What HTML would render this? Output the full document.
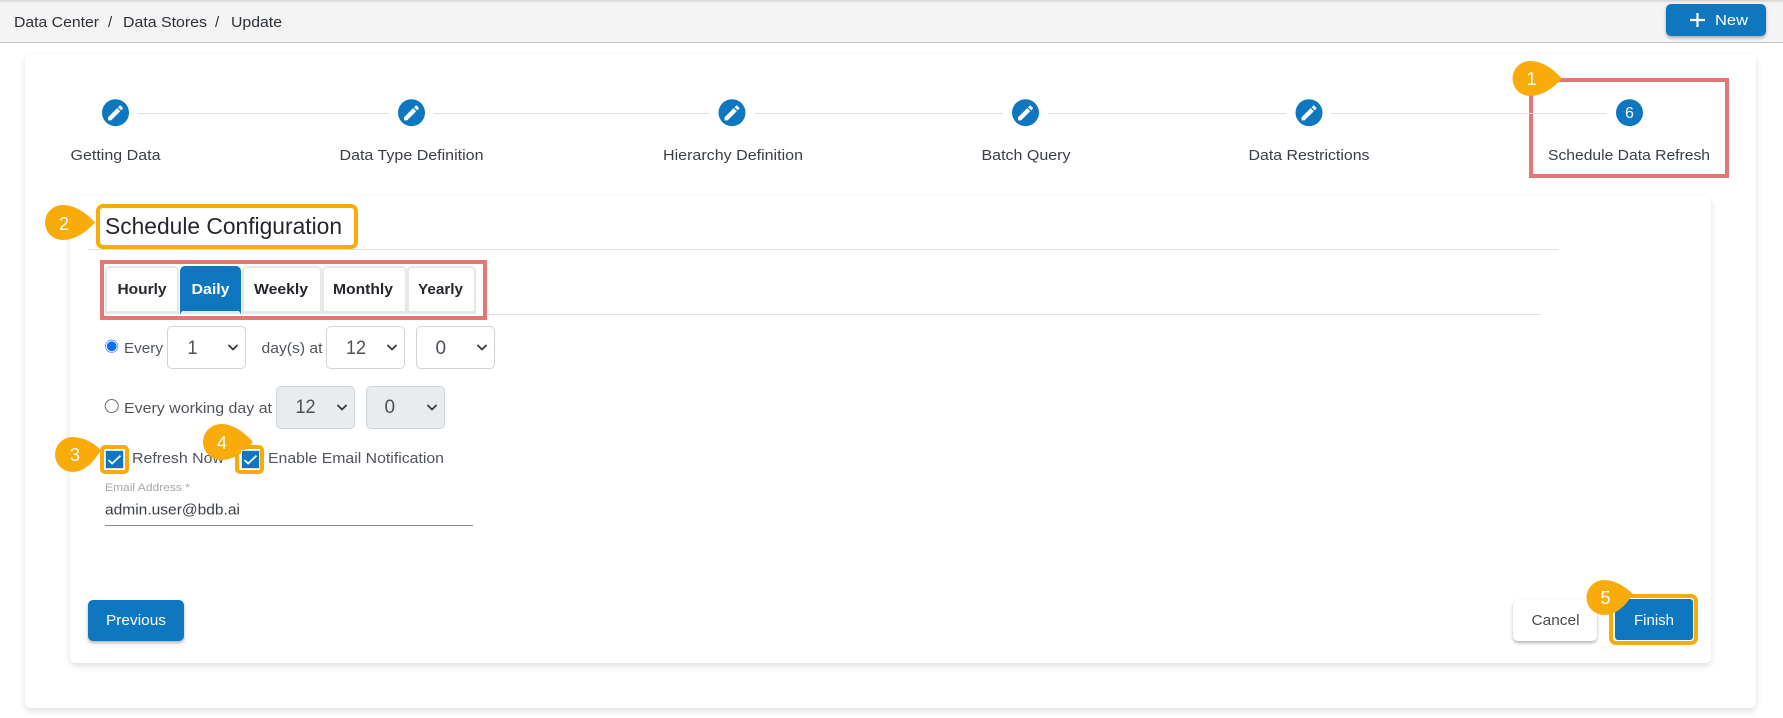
<!DOCTYPE html>
<html><head><meta charset="utf-8"><style>
html,body{margin:0;padding:0;width:1783px;height:718px;overflow:hidden;background:#fff;font-family:"Liberation Sans",sans-serif}
.b{position:absolute;box-sizing:border-box}
.bar{left:0;top:0;width:1783px;height:43px;background:#f4f4f4;border-bottom:1px solid #c6c6c6}
.top{left:0;top:0;width:1783px;height:3px;background:linear-gradient(#d4d4d4,#f4f4f4)}
.card{background:#fff;border-radius:6px;box-shadow:0 3px 7px rgba(0,0,0,.13)}
.btn{background:#0f77bf;border-radius:5px;box-shadow:0 2px 3px rgba(0,0,0,.3)}
.tab{top:266px;height:48px;border:2px solid #e6e7ea;border-bottom-width:3px;border-radius:5px 5px 0 0;background:#fff}
.sel{border:1px solid #ced4da;border-radius:5px;background:#fff}
.dis{background:#e9ecef}
.hl{border:4px solid #f9ab0a;border-radius:5px}
.red{border:4px solid #e67575}
.cb{background:#0f77bf;border:1px solid #d5e4ef}
svg{position:absolute;left:0;top:0}
text{font-family:"Liberation Sans",sans-serif}
.d{fill:#2c3038;font-size:15px}
.l{fill:#3a3f46;font-size:15px}
.m{fill:#50555b;font-size:15px}
.t{fill:#24272c;font-size:15px;font-weight:bold}
.v{fill:#495057;font-size:19px}
.w{fill:#fff;font-size:15px}
.n{fill:#fff;font-size:18px;text-anchor:middle}
</style></head><body>
<div class="b bar"></div><div class="b top"></div>
<div class="b btn" style="left:1666px;top:4px;width:100px;height:32px"></div>
<div class="b card" style="left:25px;top:54px;width:1731px;height:654px"></div>
<div class="b card" style="left:70px;top:196px;width:1641px;height:467px"></div>

<div class="b" style="left:88px;top:249px;width:1471px;height:1px;background:#dfdfdf"></div>
<div class="b" style="left:487px;top:314px;width:1054px;height:1px;background:#dfdfdf"></div>
<div class="b tab" style="left:105px;width:74px"></div>
<div class="b tab" style="left:180px;width:61px;background:#0f77bf;border-color:#0f77bf;border-bottom-color:#e6e7ea"></div>
<div class="b tab" style="left:242px;width:80px"></div>
<div class="b tab" style="left:322px;width:85px"></div>
<div class="b tab" style="left:407px;width:69px"></div>
<div class="b red" style="left:100px;top:260px;width:387px;height:60px"></div>
<div class="b red" style="left:1529px;top:78px;width:200px;height:100px"></div>
<div class="b hl" style="left:96px;top:204px;width:262px;height:45px;border-radius:7px"></div>

<div class="b sel" style="left:167px;top:326px;width:79px;height:43px"></div>
<div class="b sel" style="left:326px;top:326px;width:79px;height:43px"></div>
<div class="b sel" style="left:416px;top:326px;width:79px;height:43px"></div>
<div class="b sel dis" style="left:276px;top:386px;width:79px;height:43px"></div>
<div class="b sel dis" style="left:366px;top:386px;width:79px;height:43px"></div>

<div class="b" style="left:105px;top:525px;width:368px;height:1px;background:#8a8a8a"></div>

<div class="b btn" style="left:88px;top:600px;width:96px;height:41px"></div>
<div class="b btn" style="left:1513px;top:600px;width:84px;height:41px;background:#fff"></div>
<div class="b hl" style="left:1609px;top:594px;width:89px;height:51px;border-radius:7px"></div>
<div class="b" style="left:1615px;top:599px;width:78px;height:41px;background:#0f77bf;border-radius:3px"></div>

<svg width="1783" height="718" viewBox="0 0 1783 718">
<!-- top bar -->
<text class="d" x="14" y="27" textLength="85" lengthAdjust="spacingAndGlyphs">Data Center</text>
<text class="d" x="108" y="27">/</text>
<text class="d" x="123" y="27" textLength="84" lengthAdjust="spacingAndGlyphs">Data Stores</text>
<text class="d" x="215" y="27">/</text>
<text class="d" x="231" y="27" textLength="51" lengthAdjust="spacingAndGlyphs">Update</text>
<path d="M1697.5 13v14M1690 20h15" stroke="#fff" stroke-width="2.2" fill="none"/>
<text class="w" x="1715" y="25" font-size="16" textLength="33" lengthAdjust="spacingAndGlyphs">New</text>

<!-- stepper lines -->
<g stroke="#dedede" stroke-width="1">
<path d="M138 113.5H389M434 113.5H709M755 113.5H1003M1048 113.5H1286M1331 113.5H1607"/>
</g>
<g fill="#0f77bf">
<circle cx="115.5" cy="112.7" r="13.5"/><circle cx="411.5" cy="112.7" r="13.5"/>
<circle cx="732" cy="112.7" r="13.5"/><circle cx="1025.5" cy="112.7" r="13.5"/>
<circle cx="1309" cy="112.7" r="13.5"/><circle cx="1629.5" cy="112.7" r="13.5"/>
</g>
<g fill="#fff">
<path transform="translate(105.5,103) scale(.83)" d="M3 17.25V21h3.75L17.81 9.94l-3.75-3.75L3 17.25zM20.71 7.04c.39-.39.39-1.02 0-1.41l-2.34-2.34c-.39-.39-1.02-.39-1.41 0l-1.83 1.83 3.75 3.75 1.83-1.83z"/>
<path transform="translate(401.5,103) scale(.83)" d="M3 17.25V21h3.75L17.81 9.94l-3.75-3.75L3 17.25zM20.71 7.04c.39-.39.39-1.02 0-1.41l-2.34-2.34c-.39-.39-1.02-.39-1.41 0l-1.83 1.83 3.75 3.75 1.83-1.83z"/>
<path transform="translate(722,103) scale(.83)" d="M3 17.25V21h3.75L17.81 9.94l-3.75-3.75L3 17.25zM20.71 7.04c.39-.39.39-1.02 0-1.41l-2.34-2.34c-.39-.39-1.02-.39-1.41 0l-1.83 1.83 3.75 3.75 1.83-1.83z"/>
<path transform="translate(1015.5,103) scale(.83)" d="M3 17.25V21h3.75L17.81 9.94l-3.75-3.75L3 17.25zM20.71 7.04c.39-.39.39-1.02 0-1.41l-2.34-2.34c-.39-.39-1.02-.39-1.41 0l-1.83 1.83 3.75 3.75 1.83-1.83z"/>
<path transform="translate(1299,103) scale(.83)" d="M3 17.25V21h3.75L17.81 9.94l-3.75-3.75L3 17.25zM20.71 7.04c.39-.39.39-1.02 0-1.41l-2.34-2.34c-.39-.39-1.02-.39-1.41 0l-1.83 1.83 3.75 3.75 1.83-1.83z"/>
</g>
<text x="1629.5" y="118" fill="#fff" font-size="16" text-anchor="middle">6</text>
<text class="l" x="70.5" y="160" textLength="90" lengthAdjust="spacingAndGlyphs">Getting Data</text>
<text class="l" x="339.5" y="160" textLength="144" lengthAdjust="spacingAndGlyphs">Data Type Definition</text>
<text class="l" x="663" y="160" textLength="140" lengthAdjust="spacingAndGlyphs">Hierarchy Definition</text>
<text class="l" x="981.5" y="160" textLength="89" lengthAdjust="spacingAndGlyphs">Batch Query</text>
<text class="l" x="1248.5" y="160" textLength="121" lengthAdjust="spacingAndGlyphs">Data Restrictions</text>
<text class="l" x="1548" y="160" textLength="162" lengthAdjust="spacingAndGlyphs">Schedule Data Refresh</text>

<!-- heading -->
<text x="105" y="234" fill="#23262b" font-size="23" textLength="237" lengthAdjust="spacingAndGlyphs">Schedule Configuration</text>

<!-- tabs -->
<text class="t" x="117.5" y="294" textLength="49" lengthAdjust="spacingAndGlyphs">Hourly</text>
<text class="t" x="191.5" y="294" textLength="38" lengthAdjust="spacingAndGlyphs" style="fill:#fff">Daily</text>
<text class="t" x="254" y="294" textLength="54" lengthAdjust="spacingAndGlyphs">Weekly</text>
<text class="t" x="333" y="294" textLength="60" lengthAdjust="spacingAndGlyphs">Monthly</text>
<text class="t" x="418" y="294" textLength="45" lengthAdjust="spacingAndGlyphs">Yearly</text>

<!-- row 1 -->
<circle cx="111.7" cy="346.3" r="6.5" fill="#0d6efd"/>
<circle cx="111.7" cy="346.3" r="5.4" fill="none" stroke="#fff" stroke-width="1"/>
<text class="m" x="124" y="353" textLength="39" lengthAdjust="spacingAndGlyphs">Every</text>
<text class="v" x="187.5" y="354" textLength="10" lengthAdjust="spacingAndGlyphs">1</text>
<text class="m" x="261.5" y="353" textLength="61" lengthAdjust="spacingAndGlyphs">day(s) at</text>
<text class="v" x="346" y="354" textLength="20" lengthAdjust="spacingAndGlyphs">12</text>
<text class="v" x="435.5" y="354">0</text>
<g fill="none" stroke="#343a40" stroke-width="1.8" stroke-linecap="round" stroke-linejoin="round">
<path d="M229 345.5l4 4 4-4M388 345.5l4 4 4-4M478 345.5l4 4 4-4M338 405.5l4 4 4-4M428 405.5l4 4 4-4"/>
</g>

<!-- row 2 -->
<circle cx="111.7" cy="406" r="6.5" fill="#fff" stroke="#6b6f73" stroke-width="1"/>
<text class="m" x="124" y="413" textLength="148" lengthAdjust="spacingAndGlyphs">Every working day at</text>
<text class="v" x="295.5" y="413" textLength="20" lengthAdjust="spacingAndGlyphs">12</text>
<text class="v" x="384.5" y="413">0</text>

<!-- row 3 -->
<text class="m" x="132" y="463" textLength="92" lengthAdjust="spacingAndGlyphs">Refresh Now</text>
<text class="m" x="268" y="463" textLength="176" lengthAdjust="spacingAndGlyphs">Enable Email Notification</text>
<text x="105" y="491" fill="#a8a8a8" font-size="11" textLength="85" lengthAdjust="spacingAndGlyphs">Email Address *</text>
<text x="105" y="514.5" fill="#3a3f45" font-size="15" textLength="135" lengthAdjust="spacingAndGlyphs">admin.user@bdb.ai</text>

<!-- buttons -->
<text class="w" x="106" y="625" textLength="60" lengthAdjust="spacingAndGlyphs">Previous</text>
<text x="1531.5" y="625" fill="#4a4a4a" font-size="15" textLength="48" lengthAdjust="spacingAndGlyphs">Cancel</text>
<text class="w" x="1634" y="625" textLength="40" lengthAdjust="spacingAndGlyphs">Finish</text>

<!-- badges -->
<g fill="#f9ab0a">
<path d="M1562 78.5Q1546 61 1530 61A17.5 17.5 0 0 0 1530 96Q1546 96 1562 78.5Z"/>
<path d="M95 222.5Q79 205 62.5 205A17.5 17.5 0 0 0 62.5 240Q79 240 95 222.5Z"/>
<path d="M101 450Q87 437 72.5 437A17.5 17.5 0 0 0 72.5 472Q88 472 101 450Z"/>
<path d="M253 442Q237 424 221 424A18 18 0 0 0 221 460Q238 460 253 442Z"/>
<path d="M1633 594Q1618 580 1604 580A17.5 17.5 0 0 0 1604 615Q1620 615 1633 594Z"/>
</g>
<text class="n" x="1531.5" y="85">1</text>
<text class="n" x="64" y="230">2</text>
<text class="n" x="75" y="461">3</text>
<text class="n" x="222" y="449">4</text>
<text class="n" x="1605.5" y="604">5</text>
</svg>

<!-- checkboxes over badges -->
<div class="b hl" style="left:100px;top:445px;width:29px;height:29px"></div>
<div class="b hl" style="left:235px;top:445px;width:29px;height:29px"></div>
<div class="b cb" style="left:105px;top:450px;width:19px;height:19px"></div>
<div class="b cb" style="left:241px;top:450px;width:19px;height:19px"></div>
<svg width="1783" height="718" viewBox="0 0 1783 718">
<path d="M108.5 460l3.6 3.6 8.4-8M244.5 460l3.6 3.6 8.4-8" fill="none" stroke="#fff" stroke-width="1.7"/>
</svg>
</body></html>
